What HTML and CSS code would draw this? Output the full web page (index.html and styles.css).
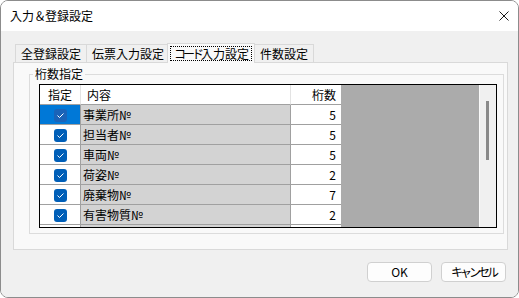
FILE: index.html
```html
<!DOCTYPE html>
<html>
<head>
    <meta charset="UTF-8">
    <title>入力＆登録設定</title>
    <link rel="stylesheet" href="styles.css">
</head>
<body>
    <div class="window">
        <div class="titlebar">
            <span class="title">入力<span class="narrow">＆</span>登録設定</span>
            <svg class="close" width="10" height="10" viewBox="0 0 10 10">
                <path d="M0.5 0.5 L9.5 9.5 M9.5 0.5 L0.5 9.5" stroke="#1a1a1a" stroke-width="1"/>
            </svg>
        </div>
        <div class="client">
            <div class="tabs">
                <div class="tab">全登録設定</div>
                <div class="tab">伝票入力設定</div>
                <div class="tab active"><span class="focus"><span class="kana">コード</span>入力設定</span></div>
                <div class="tab">件数設定</div>
            </div>
            <div class="panel">
                <fieldset class="group">
                    <legend>桁数指定</legend>
                    <div class="grid">
                        <div class="grid-area">
                            <table class="rows">
                                <thead>
                                    <tr>
                                        <th class="c-check">指定</th>
                                        <th class="c-name">内容</th>
                                        <th class="c-num">桁数</th>
                                    </tr>
                                </thead>
                                <tbody>
                                    <tr class="selected">
                                        <td class="c-check"><span class="cb"></span></td>
                                        <td class="c-name">事業所№</td>
                                        <td class="c-num">5</td>
                                    </tr>
                                    <tr>
                                        <td class="c-check"><span class="cb"></span></td>
                                        <td class="c-name">担当者№</td>
                                        <td class="c-num">5</td>
                                    </tr>
                                    <tr>
                                        <td class="c-check"><span class="cb"></span></td>
                                        <td class="c-name">車両№</td>
                                        <td class="c-num">5</td>
                                    </tr>
                                    <tr>
                                        <td class="c-check"><span class="cb"></span></td>
                                        <td class="c-name">荷姿№</td>
                                        <td class="c-num">2</td>
                                    </tr>
                                    <tr>
                                        <td class="c-check"><span class="cb"></span></td>
                                        <td class="c-name">廃棄物№</td>
                                        <td class="c-num">7</td>
                                    </tr>
                                    <tr>
                                        <td class="c-check"><span class="cb"></span></td>
                                        <td class="c-name">有害物質№</td>
                                        <td class="c-num">2</td>
                                    </tr>
                                    <tr>
                                        <td class="c-check"></td>
                                        <td class="c-name"></td>
                                        <td class="c-num"></td>
                                    </tr>
                                </tbody>
                            </table>
                        </div>
                        <div class="vscroll"><div class="thumb"></div></div>
                    </div>
                </fieldset>
            </div>
            <div class="buttons">
                <button class="btn">OK</button>
                <button class="btn"><span class="kana">キャンセル</span></button>
            </div>
        </div>
    </div>
</body>
</html>
```

FILE: styles.css
```css
body {
    margin: 0;
    background-color: #ffffff;
    font-family: "Noto Sans CJK JP", "Liberation Sans", sans-serif;
    font-size: 12px;
    color: #000;
}
.window {
    width: 519px;
    height: 298px;
    box-sizing: border-box;
    border: 1px solid #8c8c8c;
    border-radius: 8px;
    overflow: hidden;
    display: flex;
    flex-direction: column;
}
.titlebar {
    height: 30px;
    flex: none;
    background-color: #ffffff;
    display: flex;
    align-items: center;
    justify-content: space-between;
    padding: 0 9px 0 9px;
}
.title {
    line-height: 16px;
}
.narrow {
    letter-spacing: -1px;
}
.kana {
    letter-spacing: -3px;
}
.close {
    display: block;
}
.client {
    flex: 1;
    background-color: #f0f0f0;
    display: flex;
    flex-direction: column;
}
.tabs {
    display: flex;
    align-items: flex-end;
    padding: 12px 0 0 14px;
    height: 19px;
}
.tab {
    height: 18px;
    line-height: 17px;
    padding: 0 5px;
    border: 1px solid #d9d9d9;
    border-bottom: none;
    margin-right: -1px;
    background-color: #f0f0f0;
    box-sizing: border-box;
}
.tab.active {
    height: 20px;
    background-color: #f9f9f9;
    margin: 0 -1px -1px -2px;
    padding: 0 2px;
    position: relative;
    z-index: 1;
}
.focus {
    display: inline-block;
    border: 1px dotted #000;
    line-height: 13px;
    padding: 0 2px 0 3px;
    margin-top: 2px;
}
.panel {
    height: 188px;
    box-sizing: border-box;
    margin: 0 10px 0 12px;
    border: 1px solid #d9d9d9;
    background-color: #f9f9f9;
    padding: 3px 3px 0 15px;
}
.group {
    margin: 0;
    border: 1px solid #dcdcdc;
    padding: 2px 6px 5px 9px;
    min-width: 0;
}
.group legend {
    padding: 0 2px;
    margin-left: -6px;
    line-height: 16px;
}
.grid {
    display: flex;
    height: 142px;
    border: 1px solid #000;
    overflow: hidden;
}
.grid-area {
    flex: 1;
    background-color: #ababab;
    overflow: hidden;
}
.rows {
    border-collapse: separate;
    border-spacing: 0;
}
.rows th, .rows td {
    height: 19px;
    padding: 0;
    line-height: 19px;
    font-weight: normal;
    border-bottom: 1px solid #a0a0a0;
    border-right: 1px solid #a0a0a0;
    white-space: nowrap;
}
.rows th {
    background-color: #ffffff;
    border-right-color: #e3e3e3;
    border-bottom-color: #a0a0a0;
}
.rows th.c-num {
    border-right: none;
}
.c-check {
    width: 40px;
    text-align: center;
    background-color: #ffffff;
}
td.c-name {
    width: 207px;
    padding-left: 2px;
    background-color: #d3d3d3;
}
th.c-name {
    text-align: left;
    padding-left: 6px;
    width: 203px;
}
.c-num {
    width: 45px;
    text-align: right;
    padding-right: 5px !important;
    background-color: #ffffff;
}
td.c-num {
    border-right: none !important;
}
.selected .c-check {
    background-color: #0078d7;
}
.cb {
    display: inline-block;
    width: 13px;
    height: 13px;
    border-radius: 3px;
    background-color: #005fb8;
    vertical-align: middle;
    margin-top: -2px;
    background-image: url("data:image/svg+xml,%3Csvg xmlns='http://www.w3.org/2000/svg' width='13' height='13'%3E%3Cpolyline points='3.5,6.5 5.5,8.5 9.5,4.5' fill='none' stroke='white' stroke-width='1'/%3E%3C/svg%3E");
}
.selected .cb {
    background-color: #1a63b8;
}
.vscroll {
    width: 17px;
    flex: none;
    background-color: #f0f0f0;
    border-left: 1px solid #fafafa;
    padding-top: 16px;
    box-sizing: border-box;
}
.thumb {
    width: 3px;
    height: 59px;
    margin-left: 6px;
    background-color: #8a8a8a;
}
.buttons {
    display: flex;
    justify-content: flex-end;
    gap: 9px;
    padding: 12px 12px 0 0;
}
.btn {
    width: 65px;
    height: 20px;
    padding: 0;
    font-family: inherit;
    font-size: 12px;
    line-height: 16px;
    border: 1px solid #d0d0d0;
    border-radius: 4px;
    background-color: #fdfdfd;
    color: #000;
}
```
